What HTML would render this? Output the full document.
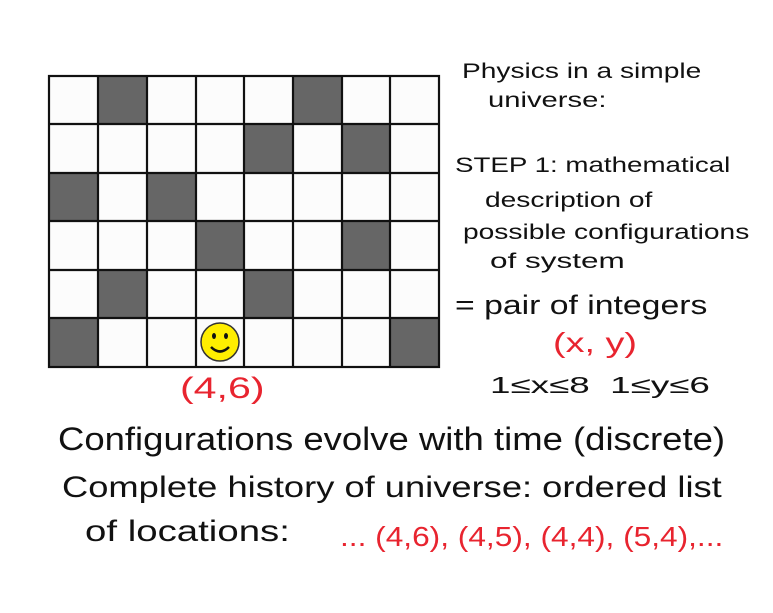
<!DOCTYPE html>
<html><head><style>
body{margin:0;width:773px;height:613px;background:#fff;position:relative;overflow:hidden;font-family:"Comic Sans MS","Liberation Sans",sans-serif;color:#111}
.t{position:absolute;white-space:nowrap;font-weight:300;transform-origin:0 50%}
.r{color:#e8242f}
</style></head><body>
<svg width="773" height="613" style="position:absolute;left:0;top:0">
<rect x="49" y="76" width="390" height="291" fill="#fcfcfc"/>
<g fill="#666">
<rect x="98" y="76" width="49" height="49"/><rect x="293" y="76" width="49" height="49"/>
<rect x="244" y="124" width="49" height="49"/><rect x="342" y="124" width="49" height="49"/>
<rect x="49" y="173" width="49" height="49"/><rect x="147" y="173" width="49" height="49"/>
<rect x="196" y="221" width="49" height="49"/><rect x="342" y="221" width="49" height="49"/>
<rect x="98" y="270" width="49" height="49"/><rect x="244" y="270" width="49" height="49"/>
<rect x="49" y="318" width="49" height="49"/><rect x="390" y="318" width="49" height="49"/>
</g>
<g stroke="#111" stroke-width="2.2" fill="none">
<rect x="49" y="76" width="390" height="291"/>
<path d="M98 76V367M147 76V367M196 76V367M244 76V367M293 76V367M342 76V367M390 76V367M49 124H439M49 173H439M49 221H439M49 270H439M49 318H439"/>
</g>
<circle cx="220" cy="342" r="19" fill="#ffee00" stroke="#333" stroke-width="1.5"/>
<ellipse cx="214" cy="336" rx="2" ry="3" fill="#111"/><ellipse cx="226" cy="336" rx="2" ry="3" fill="#111"/>
<path d="M211 347Q220 356 229 347" stroke="#111" stroke-width="2.5" fill="none"/>
</svg>
<div class="t r" style="left:180px;top:372px;font-size:30px;transform:scaleX(1.37)">(4,6)</div>
<div class="t" style="left:462px;top:60px;font-size:21px;transform:scaleX(1.34)">Physics in a simple</div>
<div class="t" style="left:488px;top:89px;font-size:21px;transform:scaleX(1.39)">universe:</div>
<div class="t" style="left:455px;top:154px;font-size:21px;transform:scaleX(1.32)">STEP 1: mathematical</div>
<div class="t" style="left:485px;top:189px;font-size:21px;transform:scaleX(1.34)">description of</div>
<div class="t" style="left:463px;top:221px;font-size:21px;transform:scaleX(1.34)">possible configurations</div>
<div class="t" style="left:490px;top:250px;font-size:21px;transform:scaleX(1.5)">of system</div>
<div class="t" style="left:455px;top:290px;font-size:27px;transform:scaleX(1.25)">= pair of integers</div>
<div class="t r" style="left:553px;top:327px;font-size:28px;transform:scaleX(1.35)">(x, y)</div>
<div class="t" style="left:490px;top:372px;font-size:23px;transform:scaleX(1.6)">1≤x≤8 &nbsp;1≤y≤6</div>
<div class="t" style="left:58px;top:421px;font-size:32px;transform:scaleX(1.14)">Configurations evolve with time (discrete)</div>
<div class="t" style="left:62px;top:471px;font-size:30px;transform:scaleX(1.21)">Complete history of universe: ordered list</div>
<div class="t" style="left:85px;top:515px;font-size:30px;transform:scaleX(1.28)">of locations:</div>
<div class="t r" style="left:340px;top:521px;font-size:28px;transform:scaleX(1.13)">... (4,6), (4,5), (4,4), (5,4),...</div>
</body></html>
